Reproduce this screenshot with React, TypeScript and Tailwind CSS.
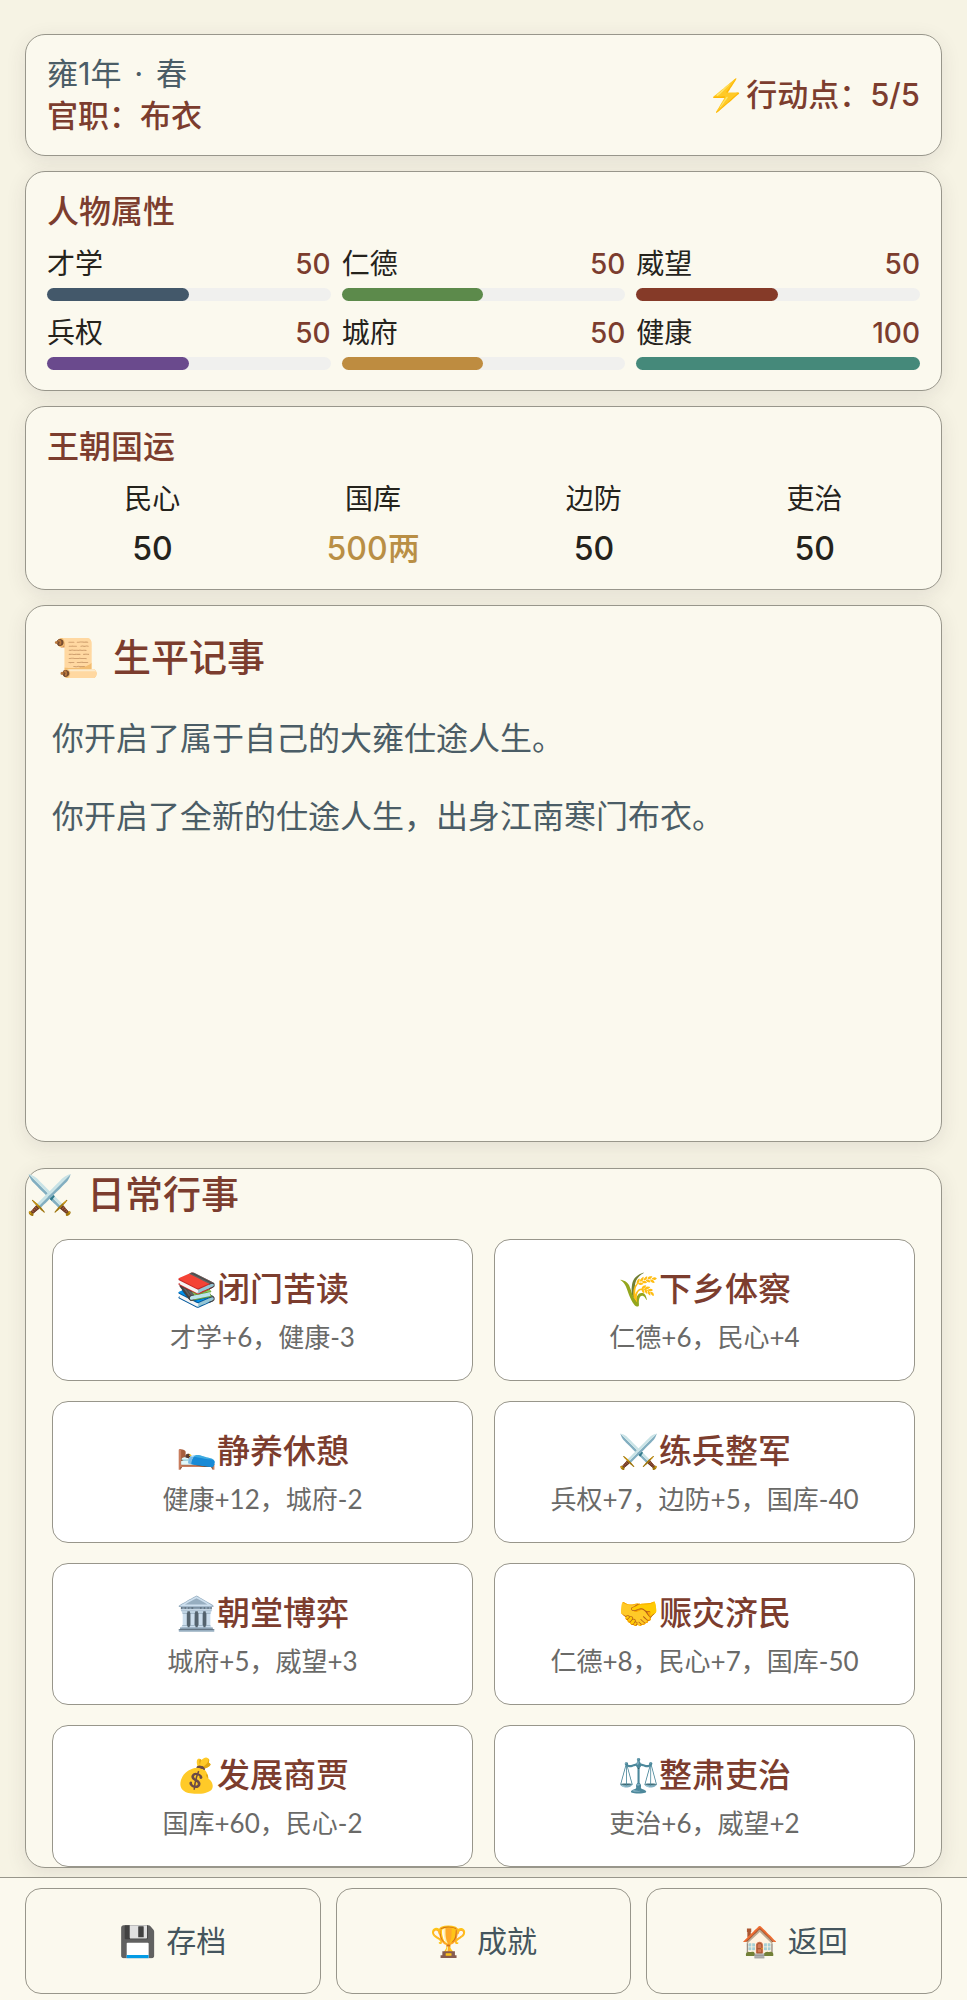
import clsx from 'clsx'

const STATS = [
  { label: '才学', value: 50,  bar: 'bg-[#43586a]' },
  { label: '仁德', value: 50,  bar: 'bg-[#5c8a4b]' },
  { label: '威望', value: 50,  bar: 'bg-[#853a28]' },
  { label: '兵权', value: 50,  bar: 'bg-[#6a4a8d]' },
  { label: '城府', value: 50,  bar: 'bg-[#be8c40]' },
  { label: '健康', value: 100, bar: 'bg-[#45897a]' },
]

const REALM = [
  { label: '民心', value: '50' },
  { label: '国库', value: '500两', gold: true },
  { label: '边防', value: '50' },
  { label: '吏治', value: '50' },
]

const LOGS = [
  '你开启了属于自己的大雍仕途人生。',
  '你开启了全新的仕途人生，出身江南寒门布衣。',
]

const ACTIONS = [
  { icon: '📚', name: '闭门苦读', effect: '才学+6，健康-3' },
  { icon: '🌾', name: '下乡体察', effect: '仁德+6，民心+4' },
  { icon: '🛌', name: '静养休憩', effect: '健康+12，城府-2' },
  { icon: '⚔️', name: '练兵整军', effect: '兵权+7，边防+5，国库-40' },
  { icon: '🏛️', name: '朝堂博弈', effect: '城府+5，威望+3' },
  { icon: '🤝', name: '赈灾济民', effect: '仁德+8，民心+7，国库-50' },
  { icon: '💰', name: '发展商贾', effect: '国库+60，民心-2' },
  { icon: '⚖️', name: '整肃吏治', effect: '吏治+6，威望+2' },
]

const MENU = [
  { icon: '💾', label: '存档' },
  { icon: '🏆', label: '成就' },
  { icon: '🏠', label: '返回' },
]

const CARD = 'rounded-[20px] border border-[#98968b] bg-[#fbf9ee] shadow-[0_5px_20px_rgba(60,50,60,0.1)]'

function StatusCard() {
  return (
    <header className={clsx(CARD, 'flex items-center justify-between px-[21px] py-[18px] text-[31px] leading-[42px]')}>
      <div>
        <p className="text-[#4b5d66]">
          雍1年<span className="mx-1"> · </span>春
        </p>
        <p className="font-medium text-[#7c3d2e]">官职：布衣</p>
      </div>
      <p className="font-medium text-[#7c3d2e]">⚡行动点：5/5</p>
    </header>
  )
}

function StatsCard() {
  return (
    <section className={clsx(CARD, 'px-[21px] py-5')}>
      <h2 className="mb-3 text-[32px] leading-10 font-medium text-[#7c3d2e]">人物属性</h2>
      <div className="grid grid-cols-3 gap-x-[11px] gap-y-3">
        {STATS.map(({ label, value, bar }) => (
          <div key={label}>
            <div className="flex justify-between text-[28px] leading-10">
              <span className="text-[#25231c]">{label}</span>
              <span className="font-medium text-[#7c3d2e]">{value}</span>
            </div>
            <div className="mt-1 h-[13px] rounded-full bg-[#f0f0ee]">
              <div className={clsx('h-full rounded-full', bar)} style={{ width: `${value}%` }} />
            </div>
          </div>
        ))}
      </div>
    </section>
  )
}

function RealmCard() {
  return (
    <section className={clsx(CARD, 'px-[21px] py-5')}>
      <h2 className="mb-3 text-[32px] leading-10 font-medium text-[#7c3d2e]">王朝国运</h2>
      <div className="grid grid-cols-4 gap-[10px] text-center">
        {REALM.map(({ label, value, gold }) => (
          <div key={label} className="flex flex-col gap-[10px]">
            <span className="text-[28px] leading-10 text-[#25231c]">{label}</span>
            <span className={clsx('text-[32px] leading-10 font-medium', gold ? 'text-[#b98f45]' : 'text-[#25231c]')}>
              {value}
            </span>
          </div>
        ))}
      </div>
    </section>
  )
}

function SectionTitle({ icon, children }: { icon: string; children: string }) {
  return (
    <h2 className="flex gap-[14px] text-[38px] leading-[50px] font-medium text-[#7c3d2e]">
      <span>{icon}</span>
      {children}
    </h2>
  )
}

function LogCard() {
  return (
    <section className={clsx(CARD, 'flex-1 p-[26px]')}>
      <SectionTitle icon="📜">生平记事</SectionTitle>
      <div className="mt-[25px] flex flex-col gap-5 font-['Noto_Sans_CJK_SC',sans-serif] text-[32px] leading-[58px] text-[#4b5d66]">
        {LOGS.map(line => (
          <p key={line}>{line}</p>
        ))}
      </div>
    </section>
  )
}

function ActionsCard() {
  return (
    <section className={clsx(CARD, 'mt-[11px]')}>
      <SectionTitle icon="⚔️">日常行事</SectionTitle>
      <div className="mt-5 grid grid-cols-2 gap-x-[21px] gap-y-5 px-[26px]">
        {ACTIONS.map(({ icon, name, effect }) => (
          <button
            key={name}
            className="flex flex-col items-center gap-[6px] rounded-2xl border border-[#98968b] bg-white px-2 py-[25px]"
          >
            <span className="text-[33px] leading-[48px] font-medium text-[#7c3d2e]">{icon}{name}</span>
            <span className="font-[Lato,'Noto_Sans_CJK_SC',sans-serif] text-[26px] leading-9 text-[#6a6a68]">{effect}</span>
          </button>
        ))}
      </div>
    </section>
  )
}

function BottomBar() {
  return (
    <nav className="flex gap-[15px] border-t border-[#98968b] bg-[#fbf9ee] px-[25px] pt-[10px] pb-[6px]">
      {MENU.map(({ icon, label }) => (
        <button
          key={label}
          className="flex h-[106px] flex-1 items-center justify-center gap-[10px] rounded-2xl border border-[#98968b] bg-[#fbf9ee] text-[30px] text-[#44555d]"
        >
          <span>{icon}</span>
          {label}
        </button>
      ))}
    </nav>
  )
}

export default function App() {
  return (
    <div className="flex min-h-screen flex-col bg-[#f6f3e4] font-[Inter,'Noto_Sans_CJK_SC',sans-serif]">
      <main className="flex flex-1 flex-col gap-[15px] px-[25px] pt-[34px] pb-[9px]">
        <StatusCard />
        <StatsCard />
        <RealmCard />
        <LogCard />
        <ActionsCard />
      </main>
      <div className="relative">
        <BottomBar />
      </div>
    </div>
  )
}
